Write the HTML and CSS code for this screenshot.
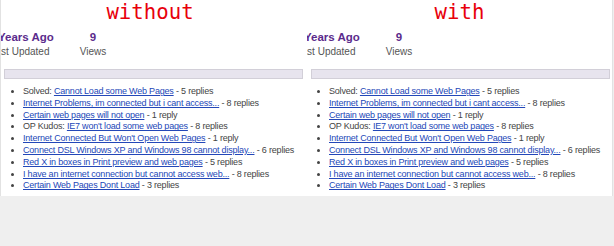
FILE: index.html
```html
<!DOCTYPE html>
<html lang="en">
<head>
  <meta charset="UTF-8" />
  <title>Without / with</title>
  <link rel="stylesheet" href="styles.css">
</head>
<body>
  <div class="compare">

    <div class="panel panel-left">
      <div class="caption">without</div>
      <div class="stats">
        <div class="stat stat-age">
          <div class="stat-value">Years Ago</div>
          <div class="stat-label">Last Updated</div>
        </div>
        <div class="stat stat-views">
          <div class="stat-value">9</div>
          <div class="stat-label">Views</div>
        </div>
      </div>
      <div class="bar"></div>
      <ul class="threads">
        <li>Solved: <a href="#">Cannot Load some Web Pages</a> - 5 replies</li>
        <li><a href="#">Internet Problems, im connected but i cant access...</a> - 8 replies</li>
        <li><a href="#">Certain web pages will not open</a> - 1 reply</li>
        <li>OP Kudos: <a href="#">IE7 won't load some web pages</a> - 8 replies</li>
        <li><a href="#">Internet Connected But Won't Open Web Pages</a> - 1 reply</li>
        <li><a href="#">Connect DSL Windows XP and Windows 98 cannot display...</a> - 6 replies</li>
        <li><a href="#">Red X in boxes in Print preview and web pages</a> - 5 replies</li>
        <li><a href="#">I have an internet connection but cannot access web...</a> - 8 replies</li>
        <li><a href="#">Certain Web Pages Dont Load</a> - 3 replies</li>
      </ul>
    </div>

    <div class="panel panel-right">
      <div class="caption">with</div>
      <div class="stats">
        <div class="stat stat-age">
          <div class="stat-value">Years Ago</div>
          <div class="stat-label">Last Updated</div>
        </div>
        <div class="stat stat-views">
          <div class="stat-value">9</div>
          <div class="stat-label">Views</div>
        </div>
      </div>
      <div class="bar"></div>
      <ul class="threads">
        <li>Solved: <a href="#">Cannot Load some Web Pages</a> - 5 replies</li>
        <li><a href="#">Internet Problems, im connected but i cant access...</a> - 8 replies</li>
        <li><a href="#">Certain web pages will not open</a> - 1 reply</li>
        <li>OP Kudos: <a href="#">IE7 won't load some web pages</a> - 8 replies</li>
        <li><a href="#">Internet Connected But Won't Open Web Pages</a> - 1 reply</li>
        <li><a href="#">Connect DSL Windows XP and Windows 98 cannot display...</a> - 6 replies</li>
        <li><a href="#">Red X in boxes in Print preview and web pages</a> - 5 replies</li>
        <li><a href="#">I have an internet connection but cannot access web...</a> - 8 replies</li>
        <li><a href="#">Certain Web Pages Dont Load</a> - 3 replies</li>
      </ul>
    </div>

  </div>
</body>
</html>
```

FILE: styles.css
```css
body {
  margin: 0;
  background: #efefef;
  font-family: "Liberation Sans", Arial, sans-serif;
}
.compare {
  display: flex;
  width: 614px;
}
.panel {
  width: 307px;
  height: 196px;
  background: #ffffff;
  overflow: hidden;
}
.panel-left {
  border-left: 1px solid #e2e2e2;
  width: 306px;
}
.panel-right {
  width: 305px;
  border-right: 1px solid #e2e2e2;
}
.caption {
  font-family: "DejaVu Sans Mono", monospace;
  font-size: 20.7px;
  line-height: 22px;
  color: #e8000b;
  text-align: center;
  padding-top: 1px;
}
.panel-left .caption {
  padding-right: 8px;
}
.stats {
  display: flex;
  margin-top: 7px;
}
.stat {
  display: flex;
  flex-direction: column;
}
.stat-age {
  width: 75px;
  margin-left: -3px;
}
.stat-age .stat-label {
  margin-left: -8px;
}
.stat-views {
  width: 40px;
  align-items: center;
}
.stat-value {
  font-size: 11.5px;
  font-weight: bold;
  line-height: 14px;
  color: #5b2b8c;
  white-space: nowrap;
}
.stat-label {
  font-size: 10px;
  line-height: 16px;
  color: #555;
  white-space: nowrap;
}
.bar {
  height: 8px;
  margin: 9px 4px 0 3px;
  background: #e7e4ee;
  border: 1px solid #d2cfd8;
}
.panel-right .bar {
  margin-left: 4px;
  margin-right: 2px;
}
.threads {
  margin: 7px 0 0;
  padding-left: 22px;
  font-size: 9px;
  letter-spacing: -0.2px;
  line-height: 11.8px;
  color: #444;
  white-space: nowrap;
}
.threads a {
  color: #2347b8;
}
```
